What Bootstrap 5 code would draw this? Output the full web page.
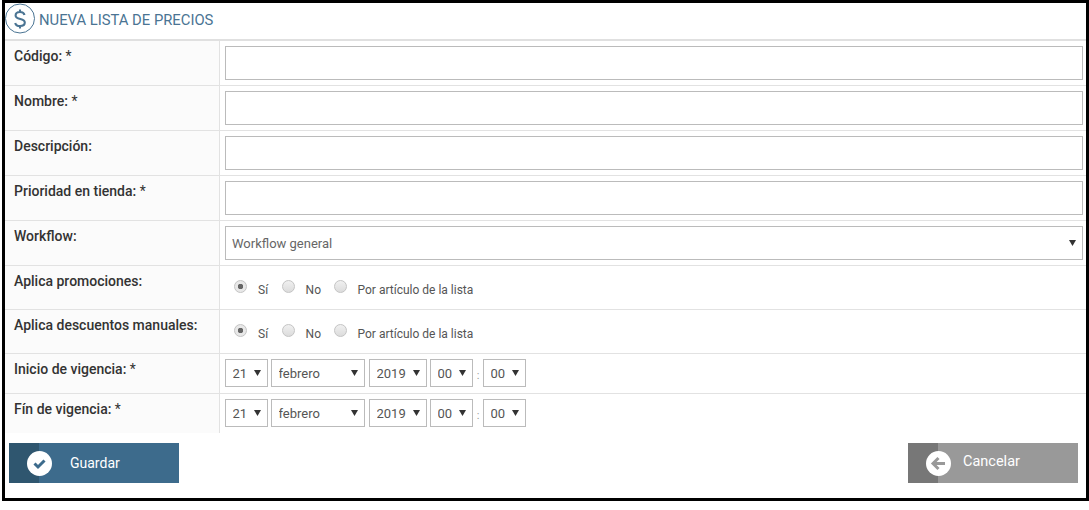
<!DOCTYPE html>
<html lang="es">
<head>
  <meta charset="UTF-8" />
  <title>Nueva lista de precios</title>
  <link href="https://cdn.jsdelivr.net/npm/bootstrap@5.3.0/dist/css/bootstrap.min.css" rel="stylesheet"/>
  <style>
    body {
      background-color: #fff;
      font-family: Roboto, sans-serif;
      font-size: 13px;
      color: #555;
    }
    .frame {
      width: 1087px;
      height: 501px;
      margin-left: 2px;
      border: 3px solid #000;
      background-color: #fff;
    }
    .form-head {
      height: 38px;
      border-bottom: 2px solid #e0e0e0;
      color: #4a7493;
      font-size: 14.8px;
    }
    .head-title { margin-bottom: 1px; }
    .head-icon {
      width: 30px;
      height: 31px;
      margin-right: 4px;
      flex: none;
    }
    .form-line {
      display: flex;
      height: 45px;
      border-bottom: 1px solid #e2e2e2;
    }
    .form-line.short { height: 44px; }
    .form-line.date { height: 40px; }
    .form-line.last { height: 39px; border-bottom: 0; }
    .line-label {
      width: 215px;
      flex: none;
      padding: 5px 0 0 9px;
      background-color: #fbfbfb;
      border-right: 1px solid #e2e2e2;
      font-weight: 500;
      font-size: 14px;
      line-height: 20px;
      color: #333;
    }
    .req-mark { font-weight: 400; }
    .line-field {
      flex: 1;
      padding: 5px 3px 0 5px;
    }
    .text-box {
      width: 100%;
      height: 34px;
      border: 1px solid #bbb;
      display: block;
      color: #555;
      background-color: #fff;
      outline: 0;
    }
    .select-box {
      appearance: none;
      height: 28px;
      border: 1px solid #bbb;
      background-color: #fff;
      font-family: Roboto, sans-serif;
      font-size: 13px;
      color: #555;
      padding: 1px 0 0 6.500px;
      outline: 0;
      background-repeat: no-repeat;
      background-image: url("data:image/svg+xml,%3Csvg xmlns='http://www.w3.org/2000/svg' width='7' height='6'%3E%3Cpath d='M0 0h7L3.5 6z' fill='%23333'/%3E%3C/svg%3E");
      background-position: right 6px center;
    }
    .select-wide { width: 100%; height: 34px; padding: 2px 0 0 6px; color: #666; }
    .sel-day { width: 43px; }
    .sel-month { width: 94px; margin-right: 1px; }
    .sel-year { width: 58px; }
    .sel-hour { width: 43px; }
    .date-row { gap: 3px; }
    .time-sep { color: #999; font-size: 11px; width: 4px; text-align: center; }
    .radio-row {
      padding: 15px 0 0 14px;
      font-size: 12px;
      color: #555;
    }
    .radio-dot {
      appearance: none;
      width: 13px;
      height: 13px;
      margin: -1px 11px 0 0;
      border-radius: 50%;
      border: 1px solid #c4c4c4;
      background: linear-gradient(#f0f0f0, #dcdcdc);
      flex: none;
    }
    .radio-dot:last-of-type { margin-right: 11px; margin-left: -1px; }
    .radio-dot:checked {
      background: radial-gradient(circle, #666 0 2.500px, #e8e8e8 3px);
    }
    .radio-text { margin-right: 13.500px; }
    .action-bar {
      padding: 10px 8px 0 4px;
    }
    .action-btn {
      width: 170px;
      height: 40px;
      border: 0;
      display: flex;
      align-items: center;
      color: #fff;
      font-family: Roboto, sans-serif;
      font-size: 14px;
      padding: 0;
    }
    .action-side {
      width: 30px;
      height: 100%;
      flex: none;
    }
    .action-disc {
      width: 25px;
      height: 25px;
      margin-left: -12px;
      flex: none;
    }
    .save-btn { background-color: #3d6b8c; }
    .save-btn .action-side { background-color: #2f566f; }
    .save-btn .action-label { margin-left: 18px; }
    .cancel-btn { background-color: #999; }
    .cancel-btn .action-side { background-color: #777; }
    .cancel-btn .action-label { margin-left: 12px; margin-top: -2px; font-size: 14.500px; }
  </style>
</head>
<body>
  <div class="frame">
    <div class="form-head d-flex align-items-center">
      <svg class="head-icon align-self-start" viewBox="0 0 30 31">
        <circle cx="15" cy="15.500" r="14.500" fill="#fff" stroke="#4a7493" stroke-width="1"/>
        <path d="M19.500 12c-.4-1.900-2.100-3-4.500-3-2.600 0-4.400 1.400-4.400 3.500 0 4.700 9.200 2.500 9.200 7 0 2.100-2 3.500-4.800 3.500-2.500 0-4.300-1.100-4.800-3.100M15 6.500V9M15 23v2.500" fill="none" stroke="#4a7493" stroke-width="2.100"/>
      </svg>
      <span class="head-title">NUEVA LISTA DE PRECIOS</span>
    </div>

    <div class="form-line">
      <div class="line-label">Código: <span class="req-mark">*</span></div>
      <div class="line-field"><input class="text-box" type="text"></div>
    </div>
    <div class="form-line">
      <div class="line-label">Nombre: <span class="req-mark">*</span></div>
      <div class="line-field"><input class="text-box" type="text"></div>
    </div>
    <div class="form-line">
      <div class="line-label">Descripción:</div>
      <div class="line-field"><input class="text-box" type="text"></div>
    </div>
    <div class="form-line">
      <div class="line-label">Prioridad en tienda: <span class="req-mark">*</span></div>
      <div class="line-field"><input class="text-box" type="text"></div>
    </div>
    <div class="form-line">
      <div class="line-label">Workflow:</div>
      <div class="line-field">
        <select class="select-box select-wide"><option>Workflow general</option></select>
      </div>
    </div>
    <div class="form-line short">
      <div class="line-label">Aplica promociones:</div>
      <div class="line-field radio-row d-flex align-items-start">
        <input class="radio-dot" type="radio" name="promo" checked><span class="radio-text">Sí</span>
        <input class="radio-dot" type="radio" name="promo"><span class="radio-text">No</span>
        <input class="radio-dot" type="radio" name="promo"><span>Por artículo de la lista</span>
      </div>
    </div>
    <div class="form-line short">
      <div class="line-label">Aplica descuentos manuales:</div>
      <div class="line-field radio-row d-flex align-items-start">
        <input class="radio-dot" type="radio" name="desc" checked><span class="radio-text">Sí</span>
        <input class="radio-dot" type="radio" name="desc"><span class="radio-text">No</span>
        <input class="radio-dot" type="radio" name="desc"><span>Por artículo de la lista</span>
      </div>
    </div>
    <div class="form-line date">
      <div class="line-label">Inicio de vigencia: <span class="req-mark">*</span></div>
      <div class="line-field d-flex date-row">
        <select class="select-box sel-day"><option>21</option></select>
        <select class="select-box sel-month"><option>febrero</option></select>
        <select class="select-box sel-year"><option>2019</option></select>
        <select class="select-box sel-hour"><option>00</option></select>
        <span class="time-sep align-self-center">:</span>
        <select class="select-box sel-hour"><option>00</option></select>
      </div>
    </div>
    <div class="form-line date last">
      <div class="line-label">Fín de vigencia: <span class="req-mark">*</span></div>
      <div class="line-field d-flex date-row">
        <select class="select-box sel-day"><option>21</option></select>
        <select class="select-box sel-month"><option>febrero</option></select>
        <select class="select-box sel-year"><option>2019</option></select>
        <select class="select-box sel-hour"><option>00</option></select>
        <span class="time-sep align-self-center">:</span>
        <select class="select-box sel-hour"><option>00</option></select>
      </div>
    </div>

    <div class="action-bar d-flex justify-content-between">
      <button class="action-btn save-btn" type="button">
        <span class="action-side"></span>
        <svg class="action-disc" viewBox="0 0 25 25">
          <circle cx="12.500" cy="12.500" r="12.500" fill="#fff"/>
          <path d="M7.500 12.500l3.500 3.500 6.500-6.500" fill="none" stroke="#3d6b8c" stroke-width="3"/>
        </svg>
        <span class="action-label">Guardar</span>
      </button>
      <button class="action-btn cancel-btn" type="button">
        <span class="action-side"></span>
        <svg class="action-disc" viewBox="0 0 25 25">
          <circle cx="12.500" cy="12.500" r="12.500" fill="#fff"/>
          <path d="M19 12.500H7.500M12.500 7l-5.500 5.500 5.500 5.500" fill="none" stroke="#999" stroke-width="3"/>
        </svg>
        <span class="action-label">Cancelar</span>
      </button>
    </div>
  </div>
  <script src="https://cdn.jsdelivr.net/npm/bootstrap@5.3.0/dist/js/bootstrap.bundle.min.js"></script>
</body>
</html>
